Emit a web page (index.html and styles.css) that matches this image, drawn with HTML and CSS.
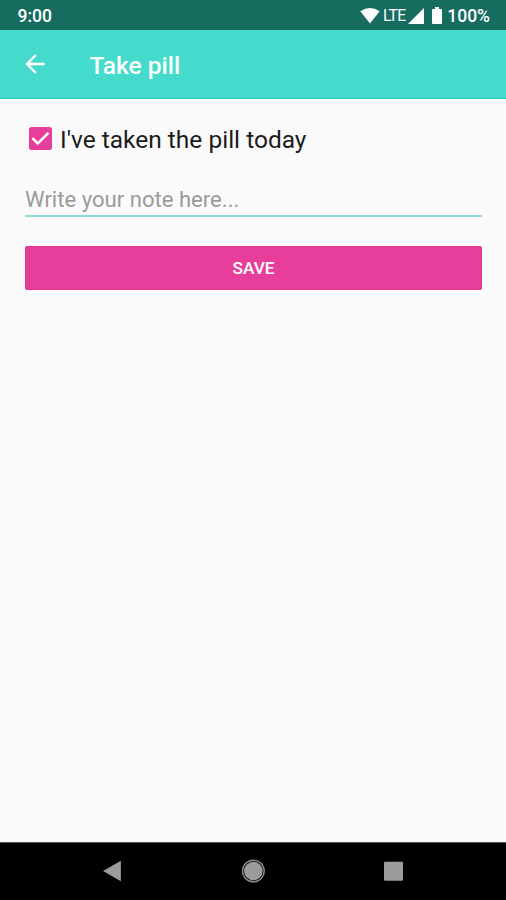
FILE: index.html
```html
<!DOCTYPE html>
<html lang="en">
<head>
<meta charset="utf-8">
<title>Take pill</title>
<link rel="stylesheet" href="styles.css">
</head>
<body>
<div class="screen">
  <div class="status">
    <span class="clock">9:00</span>
    <div class="indicators">
      <svg class="wifi" width="20" height="16" viewBox="0 0 20 16"><path d="M0.3 3.3Q10-3.1 19.7 3.3L10 15.6Z"/></svg>
      <span class="lte">LTE</span>
      <svg class="signal" width="16" height="16" viewBox="0 0 16 16"><path d="M16 0V16H0Z"/></svg>
      <svg class="battery" width="10" height="17" viewBox="0 0 10 17"><path d="M3 0H7V2H9Q10 2 10 3V16Q10 17 9 17H1Q0 17 0 16V3Q0 2 1 2H3Z"/></svg>
      <span class="percent">100%</span>
    </div>
  </div>
  <header class="appbar">
    <svg class="back" width="20" height="20" viewBox="0 0 20 20"><path d="M19.7 10H2M10.9 1L2 10L10.9 19"/></svg>
    <h1 class="title">Take pill</h1>
  </header>
  <main class="content">
    <label class="check">
      <svg class="checkbox" width="23" height="23" viewBox="0 0 23 23"><rect class="box" width="23" height="23" rx="2.5"/><path class="tick" d="M3.4 11.2L8.7 16.4L19.4 5.9"/></svg>
      <span class="check-text">I've taken the pill today</span>
    </label>
    <div class="note">Write your note here...</div>
    <button class="save">SAVE</button>
  </main>
  <nav class="navbar">
    <svg width="20" height="24" viewBox="0 0 20 24"><path d="M18.9 1.8V22.2L1 12Z"/></svg>
    <svg width="24" height="24" viewBox="0 0 24 24"><circle cx="12.4" cy="12" r="9.3"/><circle class="ring" cx="12.4" cy="12" r="10.8"/></svg>
    <svg width="20" height="24" viewBox="0 0 20 24"><rect x="0" y="2.7" width="19" height="19" rx="1"/></svg>
  </nav>
</div>
</body>
</html>
```
FILE: styles.css
```css
* { box-sizing: border-box; }
body { margin: 0; font-family: Roboto, sans-serif; background: #fafafa; }
svg { display: block; flex: none; }
.screen { display: flex; flex-direction: column; height: 900px; width: 506px; }
.status {
  display: flex; align-items: center; justify-content: space-between;
  height: 30px; padding: 2px 16px 0 17.5px;
  background: #176c60; color: #fff; font-size: 17.5px; font-weight: 500; line-height: 28px;
}
.indicators { display: flex; align-items: center; fill: #fff; }
.wifi, .signal { margin-bottom: 1px; }
.lte { margin-left: 3px; font-size: 15.7px; font-weight: 400; letter-spacing: -0.8px; }
.signal { margin-left: 3px; }
.battery { margin: 0 5px 2px 8px; }
.appbar {
  display: flex; align-items: center; height: 69px; padding: 0 25px;
  background: #45dbcc; border-bottom: 1px solid #20cdbf; color: #fff;
}
.back { fill: none; stroke: #fff; stroke-width: 2.4; }
.title { margin: 3px 0 0 44.5px; font-size: 24.5px; font-weight: 500; line-height: 30px; }
.content { flex: 1; padding: 24px 24px 0 25px; }
.check { display: flex; align-items: center; height: 32px; padding-left: 3.5px; color: #1c1c1c; }
.checkbox { margin-bottom: 2px; }
.box { fill: #e83e9b; }
.tick { fill: none; stroke: #fff; stroke-width: 2.5; }
.check-text { margin: 2px 0 0 8.5px; font-size: 24.5px; line-height: 30px; }
.note {
  height: 35px; margin-top: 27px; border-bottom: 2px solid #86ded6;
  color: #9b9b9b; font-size: 22.1px; line-height: 34px;
}
.save {
  display: block; width: 100%; height: 44px; margin-top: 29px; padding: 0;
  border: 1px solid #e2338f; border-radius: 2px; background: #e83e9b;
  color: #fff; font: 500 17.3px/40px Roboto, sans-serif;
}
.navbar {
  display: flex; align-items: center; justify-content: space-between;
  height: 58px; padding: 0 102px 2px; background: #000; border-top: 1px solid #555; fill: #9c9c9c;
}
.ring { fill: none; stroke: #8c8c8c; stroke-width: 1.4; }
```
